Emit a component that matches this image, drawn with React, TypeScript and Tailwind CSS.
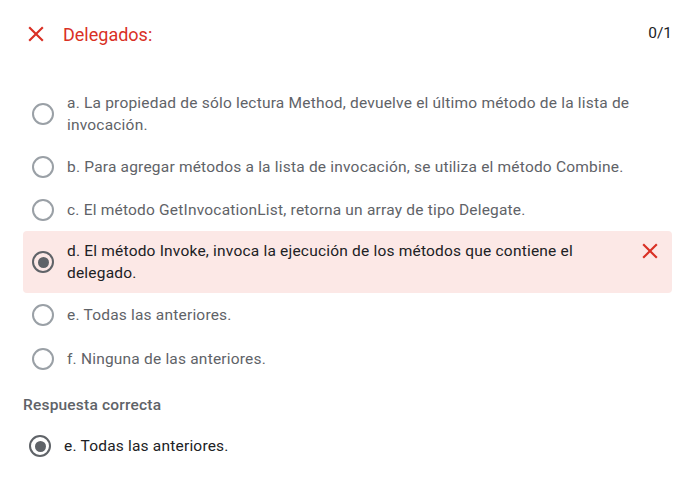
import React from "react";

type Option = {
  id: string;
  text: string;
  pad: string;
};

const options: Option[] = [
  {
    id: "a",
    text: "a. La propiedad de sólo lectura Method, devuelve el último método de la lista de invocación.",
    pad: "py-[9px]",
  },
  {
    id: "b",
    text: "b. Para agregar métodos a la lista de invocación, se utiliza el método Combine.",
    pad: "py-[11px]",
  },
  {
    id: "c",
    text: "c. El método GetInvocationList, retorna un array de tipo Delegate.",
    pad: "py-[10px]",
  },
  {
    id: "d",
    text: "d. El método Invoke, invoca la ejecución de los métodos que contiene el delegado.",
    pad: "py-[9px]",
  },
  { id: "e", text: "e. Todas las anteriores.", pad: "py-[11px]" },
  { id: "f", text: "f. Ninguna de las anteriores.", pad: "py-[11px]" },
];

const selected = "d";

const CloseIcon = ({ className }: { className?: string }) => (
  <svg viewBox="0 0 24 24" className={className} fill="currentColor">
    <path d="M19 6.41 17.59 5 12 10.59 6.41 5 5 6.41 10.59 12 5 17.59 6.41 19 12 13.41 17.59 19 19 17.59 13.41 12z" />
  </svg>
);

const Radio = ({ checked }: { checked: boolean }) => (
  <div
    className={
      checked
        ? "w-[22px] h-[22px] shrink-0 rounded-full border-2 border-[#5f6368] flex items-center justify-center"
        : "w-[22px] h-[22px] shrink-0 rounded-full border-2 border-[#9aa0a6]"
    }
  >
    {checked && <div className="w-[11px] h-[11px] rounded-full bg-[#5f6368]" />}
  </div>
);

const App: React.FC = () => {
  return (
    <div
      className="w-[685px] h-[495px] bg-white pl-[23px] pr-[13px] pt-[21px]"
      style={{ fontFamily: "Roboto, 'Liberation Sans', sans-serif" }}
    >
      <div className="flex items-center h-[26px]">
        <CloseIcon className="w-[26px] h-[26px] text-[#d93025] shrink-0" />
        <span className="ml-[14px] text-[18px] text-[#d93025]">Delegados:</span>
        <span className="ml-auto text-[15.5px] text-[#202124]">0/1</span>
      </div>

      <div className="mt-[36px]">
        {options.map((o) => {
          const isSel = o.id === selected;
          return (
            <div
              key={o.id}
              className={
                (isSel ? "rounded-[4px] bg-[#fce8e6] " : "") +
                o.pad +
                " flex items-center pl-[9px] pr-[9px]"
              }
            >
              <Radio checked={isSel} />
              <div
                className={
                  isSel
                    ? "flex-1 ml-[13px] text-[15.5px] leading-[22px] text-[#202124] tracking-[0.2px]"
                    : "flex-1 ml-[13px] text-[15.5px] leading-[22px] text-[#5f6368] tracking-[0.2px]"
                }
              >
                {o.text}
              </div>
              <div className="w-[26px] ml-[1px] shrink-0 self-start">
                {isSel && (
                  <CloseIcon className="w-[26px] h-[26px] -mt-[2px] text-[#d93025]" />
                )}
              </div>
            </div>
          );
        })}
      </div>

      <div className="mt-[13px] text-[15.5px] leading-[22px] font-medium text-[#5f6368] tracking-[0.2px]">
        Respuesta correcta
      </div>
      <div className="flex items-center mt-[19px] pl-[6px]">
        <Radio checked />
        <span className="ml-[13px] text-[15.5px] leading-[22px] text-[#202124] tracking-[0.2px]">
          e. Todas las anteriores.
        </span>
      </div>
    </div>
  );
};

export default App;
